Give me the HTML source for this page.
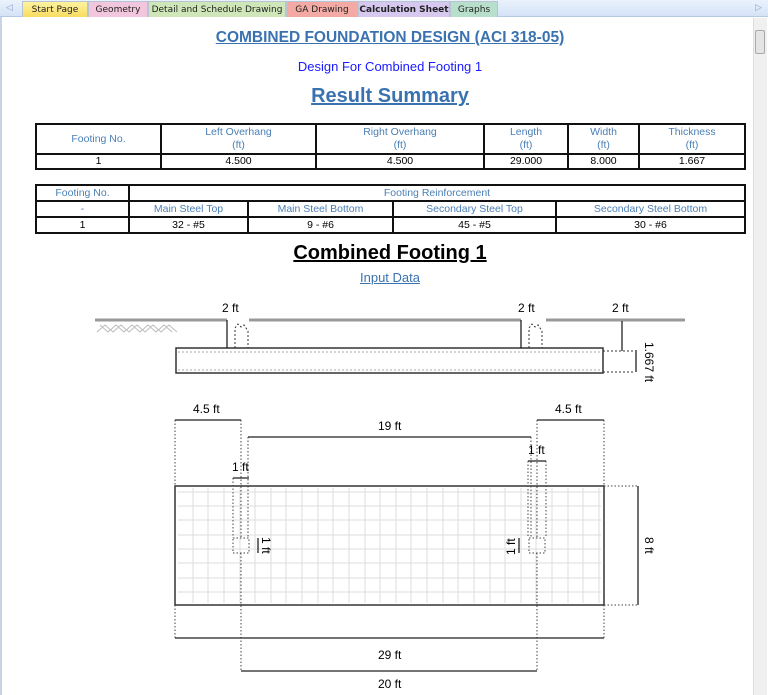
<!DOCTYPE html>
<html><head><meta charset="utf-8"><style>
*{margin:0;padding:0;box-sizing:border-box}
body{width:768px;height:695px;overflow:hidden;background:#fff;font-family:"Liberation Sans",sans-serif;position:relative}
.tabs{position:absolute;left:0;top:0;width:768px;height:17px;background:linear-gradient(#eaf2fd,#d5e3f7);border-bottom:1px solid #b4c8e4}
.tab{position:absolute;top:1px;height:16px;font-size:9px;line-height:16px;text-align:center;color:#222;border:1px solid #b8c4d4;border-bottom:none;font-family:"DejaVu Sans",sans-serif}
.a{position:absolute;white-space:nowrap}
table{position:absolute;border-collapse:collapse;font-size:10.5px;font-family:"Liberation Sans",sans-serif}
td{border:2px solid #111;text-align:center;padding:0;line-height:13px}
.h{color:#4a7fb5}
</style></head><body>
<div class="tabs">
<div class="a" style="left:6px;top:2px;font-size:9px;color:#8aa0c8">◁</div>
<div class="tab" style="left:22px;width:66px;background:linear-gradient(#fff3a0,#f8dc60)">Start Page</div>
<div class="tab" style="left:88px;width:60px;background:#f2c6dc">Geometry</div>
<div class="tab" style="left:148px;width:138px;background:#cfe7b8">Detail and Schedule Drawing</div>
<div class="tab" style="left:286px;width:72px;background:#f4aaa4">GA Drawing</div>
<div class="tab" style="left:358px;width:92px;background:#d6c8ef;font-weight:bold">Calculation Sheet</div>
<div class="tab" style="left:450px;width:48px;background:#b8dfcc">Graphs</div>
<div class="a" style="left:755px;top:2px;font-size:9px;color:#8aa0c8">▷</div>
</div>
<div class="a" style="left:753px;top:18px;width:14px;height:677px;background:#f0f0f0;border-left:1px solid #ddd"></div>
<div class="a" style="left:755px;top:30px;width:10px;height:24px;background:#e4e4e4;border:1px solid #aaa;border-radius:2px"></div>
<div class="a" style="left:0;top:17px;width:2px;height:678px;background:#c8d4e4"></div>

<div class="a" style="left:0;width:780px;top:29px;text-align:center;font-size:15.5px;font-weight:bold;color:#3a72b0;text-decoration:underline">COMBINED FOUNDATION DESIGN (ACI 318-05)</div>
<div class="a" style="left:0;width:780px;top:59px;text-align:center;font-size:13px;color:#1a1aff">Design For Combined Footing 1</div>
<div class="a" style="left:0;width:780px;top:85px;text-align:center;font-size:20px;font-weight:bold;color:#3a72b0;text-decoration:underline">Result Summary</div>

<table style="left:35px;top:123px;width:711px">
<tr style="height:30px"><td class="h" style="width:125px">Footing No.</td><td class="h" style="width:155px">Left Overhang<br>(ft)</td><td class="h" style="width:168px">Right Overhang<br>(ft)</td><td class="h" style="width:84px">Length<br>(ft)</td><td class="h" style="width:71px">Width<br>(ft)</td><td class="h">Thickness<br>(ft)</td></tr>
<tr style="height:15px"><td>1</td><td>4.500</td><td>4.500</td><td>29.000</td><td>8.000</td><td>1.667</td></tr>
</table>
<table style="left:35px;top:184px;width:711px">
<tr style="height:16px"><td class="h" style="width:93px">Footing No.</td><td class="h" colspan="4">Footing Reinforcement</td></tr>
<tr style="height:16px"><td class="h">-</td><td class="h" style="width:119px">Main Steel Top</td><td class="h" style="width:145px">Main Steel Bottom</td><td class="h" style="width:163px">Secondary Steel Top</td><td class="h">Secondary Steel Bottom</td></tr>
<tr style="height:16px"><td>1</td><td>32 - #5</td><td>9 - #6</td><td>45 - #5</td><td>30 - #6</td></tr>
</table>

<div class="a" style="left:0;width:780px;top:242px;text-align:center;font-size:20px;font-weight:bold;color:#000;text-decoration:underline">Combined Footing 1</div>
<div class="a" style="left:0;width:780px;top:270px;text-align:center;font-size:13px;color:#3a72b0;text-decoration:underline">Input Data</div>

<svg class="a" style="left:0;top:0" width="768" height="695" font-family="Liberation Sans,sans-serif" font-size="12" fill="none">
<g stroke="#999" stroke-width="3"><line x1="95" y1="320" x2="227" y2="320"/><line x1="249" y1="320" x2="521" y2="320"/><line x1="546" y1="320" x2="685" y2="320"/></g>
<path d="M97 332l8-7 8 7 8-7 8 7 8-7 8 7 8-7 8 7 8-7 8 7M100 325l8 7 8-7 8 7 8-7 8 7 8-7 8 7 8-7 8 7" stroke="#bbb" stroke-width="1"/>
<rect x="176" y="348" width="427" height="25" stroke="#333" stroke-width="1.5"/>
<line x1="178" y1="352" x2="601" y2="352" stroke="#aaa" stroke-dasharray="2 2"/>
<line x1="178" y1="370" x2="601" y2="370" stroke="#aaa" stroke-dasharray="2 2"/>
<g stroke="#333" stroke-dasharray="2 2"><path d="M235 348V328l3-4 3 3 3-2 4 6V348M529 348V328l3-4 3 3 3-2 4 6V348"/>
<path d="M603 351H635M603 372H635"/></g>
<g stroke="#222" stroke-width="1.3"><path d="M227 320V348M521 320V348M622 321V351M636 350V372"/></g>
<g fill="#000" font-size="12"><text x="222" y="312">2 ft</text><text x="518" y="312">2 ft</text><text x="612" y="312">2 ft</text>
<text transform="translate(645,342) rotate(90)">1.667 ft</text></g>

<g stroke="#ddd" stroke-width="1">
<path d="M178 492H601M178 506H601M178 520H601M178 535H601M178 549H601M178 563H601M178 578H601M178 592H601"/>
<path d="M193 488V603M208 488V603M224 488V603M240 488V603M255 488V603M271 488V603M286 488V603M302 488V603M318 488V603M333 488V603M349 488V603M365 488V603M380 488V603M396 488V603M411 488V603M427 488V603M443 488V603M458 488V603M474 488V603M490 488V603M505 488V603M521 488V603M536 488V603M552 488V603M568 488V603M583 488V603M599 488V603"/></g>
<rect x="175" y="486" width="429" height="119" stroke="#333" stroke-width="1.5"/>
<g stroke="#444" stroke-dasharray="1.5 2">
<path d="M175 420V486M241 420V538M248 437V538M233 478V538M537 420V538M604 420V486M531 437V538M546 461V538M528 461V538"/>
<path d="M175 605V638M241 553V671M537 553V671M604 605V638M604 486H638M604 605H638"/>
<rect x="233" y="538" width="16" height="15"/><rect x="529" y="538" width="16" height="15"/></g>
<g stroke="#222" stroke-width="1.3"><path d="M175 420H241M537 420H604M248 437H531M233 478H249M528 461H546M175 638H604M241 671H537M638 486V605M258 538V553M519 538V553"/></g>
<g fill="#000" font-size="12"><text x="193" y="413">4.5 ft</text><text x="555" y="413">4.5 ft</text><text x="378" y="430">19 ft</text>
<text x="232" y="471">1 ft</text><text x="528" y="454">1 ft</text><text x="378" y="659">29 ft</text><text x="378" y="688">20 ft</text>
<text transform="translate(262,537) rotate(90)">1 ft</text><text transform="translate(515,555) rotate(-90)">1 ft</text>
<text transform="translate(645,537) rotate(90)">8 ft</text></g>
</svg>
</body></html>
